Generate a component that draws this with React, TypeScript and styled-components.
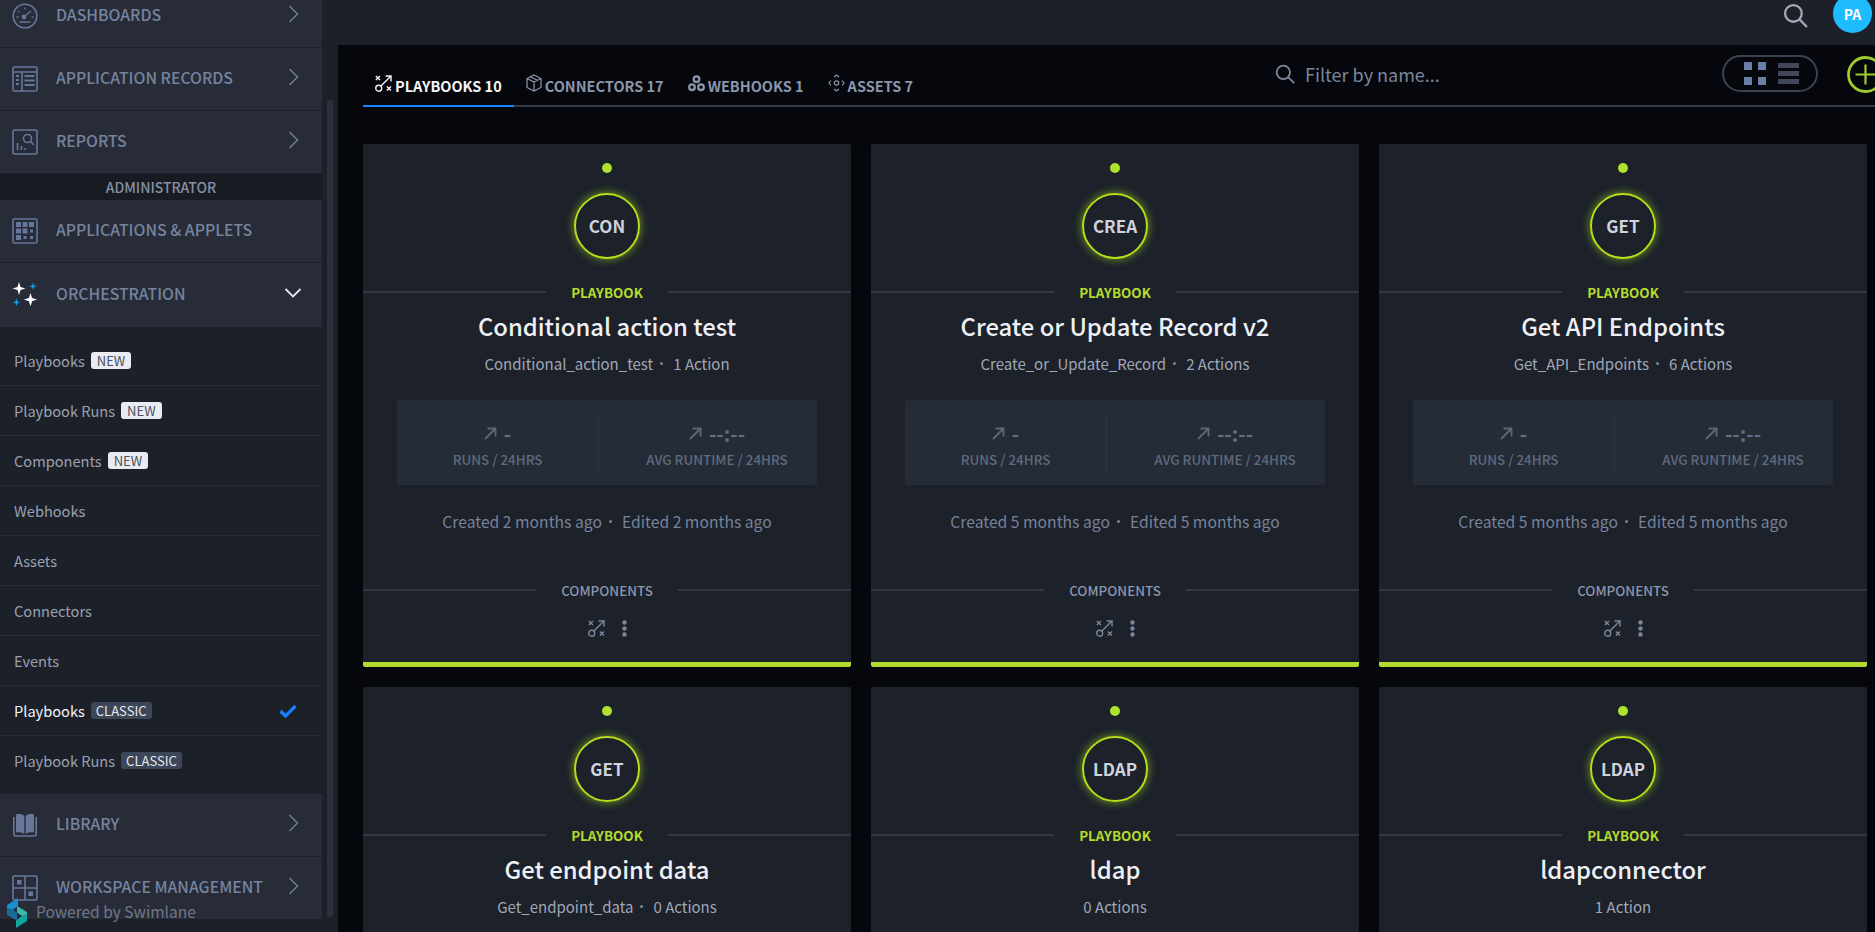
import React from 'react';
import styled, { createGlobalStyle } from 'styled-components';

const FONT = '"Noto Sans CJK JP", "Noto Sans", sans-serif';
const LIME = '#b1dc2e';

const GlobalStyle = createGlobalStyle`
  html, body {
    margin: 0;
    height: 100%;
    overflow: hidden;
    background: #05070c;
    font-family: ${FONT};
  }
  * { box-sizing: border-box; }
`;

const Shell = styled.div`
  position: relative;
  display: flex;
  width: 1875px;
  height: 932px;
  overflow: hidden;
`;

const Sidebar = styled.aside`
  display: flex;
  flex: none;
  width: 338px;
  height: 100%;
  background: #1c2029;
`;

const NavColumn = styled.div`
  width: 322px;
  height: 921px;
  overflow: hidden;
`;

const NavScroll = styled.div`
  margin-top: -15px;
`;

const ScrollTrack = styled.div`
  width: 16px;
  padding: 100px 5px 15px;
  height: 100%;
`;

const ScrollThumb = styled.div`
  width: 6px;
  height: 817px;
  background: #2b303d;
  border-radius: 3px;
`;

const NavItem = styled.div<{ $open?: boolean }>`
  display: flex;
  align-items: center;
  height: ${(p) => (p.$open ? 65 : 63)}px;
  padding: 0 23px 0 12px;
  background: #272c38;
  border-bottom: 1px solid #1c2029;
  color: #76839e;
  font-size: 15.8px;
  font-weight: 500;
`;

const NavIcon = styled.span`
  display: flex;
  flex: none;
  width: 26px;
  height: 26px;
  margin-right: 18px;
  color: #67779a;
`;

const NavLabel = styled.span`
  flex: 1;
  margin-bottom: 4px;
  white-space: nowrap;
`;

const ChevronSlot = styled.span<{ $down?: boolean }>`
  display: flex;
  margin-bottom: 4px;
  margin-right: ${(p) => (p.$down ? -3 : 0)}px;
`;

const Administrator = styled.div`
  height: 26px;
  line-height: 26px;
  background: #181b22;
  color: #8690a4;
  font-size: 14px;
  font-weight: 500;
  text-align: center;
`;

const SubList = styled.div`
  padding: 8px 0;
`;

const SubRow = styled.div<{ $last?: boolean }>`
  display: flex;
  align-items: center;
  height: 50px;
  padding: 0 25px 0 14px;
  border-bottom: 1px solid ${(p) => (p.$last ? 'transparent' : '#272c37')};
`;

const SubLabel = styled.span<{ $active?: boolean }>`
  color: ${(p) => (p.$active ? '#f2f3f6' : '#9aa1b1')};
  font-size: 14.6px;
`;

const Badge = styled.span<{ $classic?: boolean }>`
  margin-left: 6px;
  padding: 0 ${(p) => (p.$classic ? 5 : 6)}px;
  height: 17px;
  line-height: 17px;
  border-radius: 3px;
  font-size: 13px;
  background: ${(p) => (p.$classic ? '#3e4659' : '#e9ebf0')};
  color: ${(p) => (p.$classic ? '#e6e9ef' : '#4a5160')};
`;

const Check = styled.span`
  display: flex;
  margin-left: auto;
  color: #1483ff;
`;

const PoweredBy = styled.div`
  position: absolute;
  left: 7px;
  bottom: 4px;
  display: flex;
  align-items: center;
  gap: 9px;
  color: #6f7888;
  font-size: 15.5px;
`;

const PoweredText = styled.span`
  padding-bottom: 4px;
`;

const Content = styled.div`
  display: flex;
  flex: 1;
  flex-direction: column;
  min-width: 0;
  margin-left: -16px;
`;

const TopBar = styled.header`
  display: flex;
  flex: none;
  align-items: flex-start;
  justify-content: flex-end;
  height: 45px;
  padding: 3px 3px 0 0;
  background: #1c2029;
`;

const TopSearch = styled.span`
  display: flex;
  margin-right: 25px;
  color: #a3a9b8;
`;

const Avatar = styled.div`
  display: flex;
  align-items: center;
  justify-content: center;
  width: 39px;
  height: 39px;
  margin-top: -9px;
  border-radius: 50%;
  background: #1fbbff;
  color: #fff;
  font-size: 14px;
  font-weight: 700;
`;

const Main = styled.main`
  flex: 1;
  margin-left: 16px;
  padding-left: 25px;
  background: #05070c;
`;

const Toolbar = styled.div`
  display: flex;
  align-items: flex-end;
  width: 1512px;
  height: 62px;
  border-bottom: 2px solid #343a48;
`;

const Tabs = styled.div`
  display: flex;
  flex: none;
`;

const Tab = styled.div<{ $active?: boolean }>`
  display: flex;
  align-items: center;
  gap: 3px;
  height: 36px;
  margin-bottom: -2px;
  padding: 0 12px 6px;
  border-bottom: 2px solid ${(p) => (p.$active ? '#1483ff' : 'transparent')};
  color: ${(p) => (p.$active ? '#f4f5f8' : '#8b96ac')};
  font-size: 14.5px;
  font-weight: 700;
  white-space: nowrap;
`;

const TabIcon = styled.span`
  display: flex;
  margin-top: -4px;
`;

const Filter = styled.div`
  display: flex;
  align-items: center;
  align-self: center;
  gap: 10px;
  margin-left: 350px;
  margin-bottom: 3px;
  color: #7b869c;
  font-size: 18px;
`;

const ViewToggle = styled.div`
  display: flex;
  align-items: center;
  align-self: center;
  gap: 12px;
  flex: none;
  width: 96px;
  height: 37px;
  margin-left: auto;
  margin-bottom: 3px;
  padding-left: 20px;
  border: 2px solid #3a4150;
  border-radius: 19px;
`;

const AddButton = styled.div`
  display: flex;
  flex: none;
  align-self: center;
  margin-left: 29px;
  margin-right: -9px;
  margin-bottom: 2px;
  color: #a0cc2c;
`;

const CardGrid = styled.div`
  display: grid;
  grid-template-columns: repeat(3, 488px);
  gap: 20px;
  margin-top: 37px;
`;

const Card = styled.article`
  display: flex;
  flex-direction: column;
  align-items: center;
  height: 523px;
  padding-top: 19px;
  background: #1c212a;
  border-bottom: 5px solid ${LIME};
  border-radius: 2px;
`;

const StatusDot = styled.div`
  width: 10px;
  height: 10px;
  border-radius: 50%;
  background: #aee22f;
`;

const Monogram = styled.div`
  display: flex;
  align-items: center;
  justify-content: center;
  width: 66px;
  height: 66px;
  margin-top: 20px;
  padding-bottom: 2px;
  border: 2px solid #b6de1a;
  border-radius: 50%;
  color: #cfd3dd;
  font-size: 17px;
  font-weight: 700;
  box-shadow: 0 0 10px rgba(176, 222, 30, 0.65);
`;

const Divider = styled.div<{ $muted?: boolean; $top: number }>`
  display: flex;
  align-items: center;
  align-self: stretch;
  gap: 25px;
  margin-top: ${(p) => p.$top}px;
  height: 16px;
  color: ${(p) => (p.$muted ? '#8b96ac' : '#b4dc2a')};
  font-size: 13.4px;
  font-weight: ${(p) => (p.$muted ? 500 : 700)};
  white-space: nowrap;

  &::before,
  &::after {
    content: '';
    flex: 1;
    height: 2px;
    background: #323846;
  }
`;

const Title = styled.h2`
  margin: 11px 0 0;
  height: 30px;
  line-height: 30px;
  color: #eef0f5;
  font-size: 23.8px;
  font-weight: 500;
`;

const Subtitle = styled.div`
  display: flex;
  align-items: center;
  gap: 7px;
  height: 20px;
  margin-top: 12px;
  color: #a0a7b7;
  font-size: 15px;
  font-weight: 400;
`;

const Dot = styled.span`
  width: 3px;
  height: 3px;
  margin-right: 3px;
  border-radius: 50%;
  background: #7e8798;
`;

const Stats = styled.div`
  display: grid;
  grid-template-columns: 201px 1fr;
  flex: none;
  width: 420px;
  height: 85px;
  margin-top: 27px;
  padding: 13px 0;
  background: #252b37;
  border-radius: 2px;
`;

const Stat = styled.div<{ $divided?: boolean }>`
  display: flex;
  flex-direction: column;
  align-items: center;
  padding-top: 6px;
  padding-left: ${(p) => (p.$divided ? 18 : 0)}px;
  border-left: ${(p) => (p.$divided ? '1px solid #2e3542' : 'none')};
`;

const StatValue = styled.div`
  display: flex;
  align-items: center;
  gap: 7px;
  height: 26px;
  margin-top: 1px;
  color: #646e80;
  font-size: 20px;
  font-weight: 700;
`;

const StatLabel = styled.div`
  margin-top: 3px;
  color: #5f6a7d;
  font-size: 13.4px;
  font-weight: 500;
  white-space: nowrap;
`;

const Dates = styled.div`
  display: flex;
  align-items: center;
  gap: 7px;
  height: 20px;
  margin-top: 26px;
  color: #78839a;
  font-size: 15.7px;
`;

const CardActions = styled.div`
  display: flex;
  align-items: center;
  gap: 17px;
  height: 20px;
  margin-top: 20px;
  color: #7a869c;
`;

const Swatch = styled.span<{ $bright?: boolean; $w: number; $h: number }>`
  display: block;
  width: ${(p) => p.$w}px;
  height: ${(p) => p.$h}px;
  background: ${(p) => (p.$bright ? '#6a7fa6' : '#3f4759')};
`;

const GridIcon = styled.div`
  display: grid;
  grid-template-columns: 8px 8px;
  gap: 7px 6px;
`;

const ListIcon = styled.div`
  display: grid;
  gap: 3px;
`;

type IconProps = { size?: number };

const Playbook = ({ size = 17 }: IconProps) => (
  <svg width={size} height={size} viewBox="0 0 16 16" fill="none" stroke="currentColor" strokeWidth="1.3">
    <circle cx="3.5" cy="12.5" r="2.8" />
    <path d="M.8 1l3.800 3.800M4.600 1L.8 4.800M11.200 10.800l3.800 3.800M15 10.800l-3.800 3.800M5.600 10.400L15 1M10 .9h5.100V6" />
  </svg>
);

const Cube = () => (
  <svg width="16" height="18" viewBox="0 0 16 18" fill="none" stroke="currentColor" strokeWidth="1.2">
    <path d="M8 1l7 3.500v9L8 17l-7-3.500v-9zM1 4.500L8 8l7-3.500M8 8v9M4.500 2.800l7 3.500" />
  </svg>
);

const Webhook = () => (
  <svg width="17" height="17" viewBox="0 0 17 17" fill="none" stroke="currentColor" strokeWidth="2.300">
    <circle cx="8.500" cy="4.200" r="2.800" />
    <circle cx="4" cy="12.200" r="2.800" />
    <circle cx="13" cy="12.200" r="2.800" />
  </svg>
);

const Asset = () => (
  <svg width="17" height="18" viewBox="0 0 17 18" fill="none" stroke="currentColor" strokeWidth="1.200">
    <circle cx="8.500" cy="9" r="2.200" />
    <path d="M6 3l2.500-2L11 3M6 15l2.500 2L11 15M3 6.500L1 9l2 2.500M14 6.500L16 9l-2 2.500" />
  </svg>
);

const Gauge = () => (
  <svg viewBox="0 0 26 26" fill="none" stroke="currentColor" strokeWidth="1.600">
    <circle cx="13" cy="13" r="11.800" />
    <circle cx="12" cy="14" r="1.600" fill="currentColor" />
    <path d="M13 13l6-5M13 4.500v2M6 8l1.500 1.200M4.500 14h2M21.500 14h-2M7.500 19h11" strokeWidth="1.300" />
  </svg>
);

const Records = () => (
  <svg viewBox="0 0 26 26" fill="none" stroke="currentColor" strokeWidth="1.600">
    <rect x="1" y="1" width="24" height="24" rx="1.500" />
    <path d="M1 6h24M10 6v19" />
    <path d="M4 10h3M4 14h3M4 18h3M12.500 10h10M12.500 14.500h10M12.500 19h10" strokeWidth="2" />
  </svg>
);

const Report = () => (
  <svg viewBox="0 0 26 26" fill="none" stroke="currentColor" strokeWidth="1.600">
    <rect x="1" y="1" width="24" height="24" rx="1.500" />
    <circle cx="15.500" cy="9.500" r="4" />
    <path d="M18.500 12.500l3.500 3.500M5.500 21v-7M9.500 21v-4M13 21v-2" />
  </svg>
);

const AppsIcon = () => (
  <svg viewBox="0 0 26 26" fill="none" stroke="currentColor" strokeWidth="1.600">
    <rect x="1" y="1" width="24" height="24" rx="1.500" />
    <g fill="currentColor" stroke="none">
      <rect x="4" y="4" width="5" height="5" />
      <rect x="10.500" y="4" width="5" height="5" />
      <rect x="17" y="4" width="5" height="5" />
      <rect x="4" y="10.500" width="5" height="5" />
      <rect x="10.500" y="10.500" width="5" height="5" />
      <rect x="18" y="11.500" width="3" height="3" />
      <rect x="4" y="17" width="5" height="5" />
      <rect x="11.500" y="18" width="3" height="3" />
      <rect x="18" y="18" width="3" height="3" />
    </g>
  </svg>
);

const Sparkles = () => (
  <svg viewBox="0 0 26 26">
    <path fill="#fff" d="M7 0l1.500 5L13.500 6.500 8.500 8 7 13 5.500 8 .5 6.500 5.500 5zM18.500 11l1.600 5 5 1.600-5 1.600-1.600 5-1.600-5-5-1.600 5-1.600z" />
    <path fill="#12a0f0" d="M21 .5l.9 2.900 2.900.9-2.900.9-.9 2.900-.9-2.900-2.900-.9 2.900-.9zM4.500 16.500l.9 2.900 2.900.9-2.900.9-.9 2.900-.9-2.900-2.900-.9 2.900-.9z" />
  </svg>
);

const Book = () => (
  <svg viewBox="0 0 26 26">
    <path fill="currentColor" d="M4 2.500c3-1 6.500-.5 8.300 1.500V22c-2-1.500-5-2-8.300-1.500zM22 2.500c-3-1-6.500-.5-8.300 1.500V22c2-1.500 5-2 8.300-1.500z" />
    <path fill="none" stroke="currentColor" strokeWidth="1.600" d="M1.800 5v17c0 1.200.8 2 2 2h18.400c1.200 0 2-.8 2-2V5" />
  </svg>
);

const Workspace = () => (
  <svg viewBox="0 0 26 26" fill="none" stroke="currentColor" strokeWidth="1.600">
    <rect x="1" y="1" width="24" height="24" rx="1.500" />
    <path d="M13 1v24M1 13h24" />
    <rect x="5" y="5" width="4.500" height="4.500" fill="currentColor" stroke="none" />
    <rect x="16.500" y="16.500" width="4.500" height="4.500" fill="currentColor" stroke="none" />
  </svg>
);

const ChevronRight = () => (
  <svg width="12" height="18" viewBox="0 0 12 18" fill="none" stroke="#6d7a94" strokeWidth="1.600">
    <path d="M2.500 1l8 8-8 8" />
  </svg>
);

const ChevronDown = () => (
  <svg width="18" height="12" viewBox="0 0 18 12" fill="none" stroke="#e6e9ef" strokeWidth="1.800">
    <path d="M1.500 2L9 9.500 16.500 2" />
  </svg>
);

const Search = ({ size }: { size: number }) => (
  <svg width={size} height={size} viewBox="0 0 24 24" fill="none" stroke="currentColor" strokeWidth="2.200">
    <circle cx="10" cy="10" r="8" />
    <path d="M16 16l7 7" />
  </svg>
);

const ArrowUpRight = () => (
  <svg width="13" height="13" viewBox="0 0 13 13" fill="none" stroke="#5d6779" strokeWidth="1.800">
    <path d="M1 12L11 2M3.500 1.500h8v8" />
  </svg>
);

const Kebab = () => (
  <svg width="5" height="17" viewBox="0 0 5 17" fill="currentColor">
    <circle cx="2.500" cy="2.500" r="2.200" />
    <circle cx="2.500" cy="8.500" r="2.200" />
    <circle cx="2.500" cy="14.500" r="2.200" />
  </svg>
);

const Plus = () => (
  <svg width="37" height="37" viewBox="0 0 37 37" fill="none" stroke="currentColor">
    <circle cx="18.500" cy="18.500" r="17" strokeWidth="2.800" />
    <path d="M18.500 8.500v20M8.500 18.500h20" strokeWidth="2.200" />
  </svg>
);

const Logo = () => (
  <svg width="20" height="30" viewBox="0 0 20 30">
    <path fill="#1c8fd0" d="M11 0v8l-5 3.500-6-1V7z" />
    <path fill="#1a6a9e" d="M0 10.500l6 1 4 3.500v7.500L0 17z" />
    <path fill="#3bb8a8" d="M10 8l10 6v3l-5 1-5-3.500z" />
    <path fill="#13a89e" d="M20 17v6l-11 7v-7.500l6-4.500z" />
  </svg>
);

const navTop = [
  { label: 'DASHBOARDS', icon: <Gauge /> },
  { label: 'APPLICATION RECORDS', icon: <Records /> },
  { label: 'REPORTS', icon: <Report /> },
];

const subItems = [
  { label: 'Playbooks', badge: 'NEW' },
  { label: 'Playbook Runs', badge: 'NEW' },
  { label: 'Components', badge: 'NEW' },
  { label: 'Webhooks' },
  { label: 'Assets' },
  { label: 'Connectors' },
  { label: 'Events' },
  { label: 'Playbooks', badge: 'CLASSIC', active: true },
  { label: 'Playbook Runs', badge: 'CLASSIC' },
];

const cards = [
  { mono: 'CON', title: 'Conditional action test', key: 'Conditional_action_test', actions: '1 Action', age: '2 months' },
  { mono: 'CREA', title: 'Create or Update Record v2', key: 'Create_or_Update_Record', actions: '2 Actions', age: '5 months' },
  { mono: 'GET', title: 'Get API Endpoints', key: 'Get_API_Endpoints', actions: '6 Actions', age: '5 months' },
  { mono: 'GET', title: 'Get endpoint data', key: 'Get_endpoint_data', actions: '0 Actions', age: '5 months' },
  { mono: 'LDAP', title: 'ldap', key: '', actions: '0 Actions', age: '5 months' },
  { mono: 'LDAP', title: 'ldapconnector', key: '', actions: '1 Action', age: '5 months' },
];

const App: React.FC = () => {
  return (
    <Shell>
      <GlobalStyle />
      <Sidebar>
        <NavColumn>
          <NavScroll>
            {navTop.map((item) => (
              <NavItem key={item.label}>
                <NavIcon>{item.icon}</NavIcon>
                <NavLabel>{item.label}</NavLabel>
                <ChevronSlot><ChevronRight /></ChevronSlot>
              </NavItem>
            ))}
            <Administrator>ADMINISTRATOR</Administrator>
            <NavItem>
              <NavIcon><AppsIcon /></NavIcon>
              <NavLabel>APPLICATIONS &amp; APPLETS</NavLabel>
            </NavItem>
            <NavItem $open>
              <NavIcon><Sparkles /></NavIcon>
              <NavLabel>ORCHESTRATION</NavLabel>
              <ChevronSlot $down><ChevronDown /></ChevronSlot>
            </NavItem>
            <SubList>
              {subItems.map((item, i) => (
                <SubRow key={i} $last={i === subItems.length - 1}>
                  <SubLabel $active={item.active}>{item.label}</SubLabel>
                  {item.badge && <Badge $classic={item.badge === 'CLASSIC'}>{item.badge}</Badge>}
                  {item.active && (
                    <Check>
                      <svg width="18" height="14" viewBox="0 0 18 14" fill="none" stroke="currentColor" strokeWidth="3.200">
                        <path d="M1.500 7l5 5L16.500 2" />
                      </svg>
                    </Check>
                  )}
                </SubRow>
              ))}
            </SubList>
            <NavItem>
              <NavIcon><Book /></NavIcon>
              <NavLabel>LIBRARY</NavLabel>
              <ChevronSlot><ChevronRight /></ChevronSlot>
            </NavItem>
            <NavItem>
              <NavIcon><Workspace /></NavIcon>
              <NavLabel>WORKSPACE MANAGEMENT</NavLabel>
              <ChevronSlot><ChevronRight /></ChevronSlot>
            </NavItem>
          </NavScroll>
        </NavColumn>
        <ScrollTrack>
          <ScrollThumb />
        </ScrollTrack>
      </Sidebar>
      <PoweredBy>
        <Logo />
        <PoweredText>Powered by Swimlane</PoweredText>
      </PoweredBy>
      <Content>
        <TopBar>
          <TopSearch><Search size={25} /></TopSearch>
          <Avatar>PA</Avatar>
        </TopBar>
        <Main>
          <Toolbar>
            <Tabs>
              <Tab $active><TabIcon><Playbook /></TabIcon>PLAYBOOKS 10</Tab>
              <Tab><TabIcon><Cube /></TabIcon>CONNECTORS 17</Tab>
              <Tab><TabIcon><Webhook /></TabIcon>WEBHOOKS 1</Tab>
              <Tab><TabIcon><Asset /></TabIcon>ASSETS 7</Tab>
            </Tabs>
            <Filter>
              <Search size={20} />
              Filter by name...
            </Filter>
            <ViewToggle>
              <GridIcon>
                <Swatch $bright $w={8} $h={8} />
                <Swatch $bright $w={8} $h={8} />
                <Swatch $bright $w={8} $h={8} />
                <Swatch $bright $w={8} $h={8} />
              </GridIcon>
              <ListIcon>
                <Swatch $w={21} $h={5} />
                <Swatch $w={21} $h={5} />
                <Swatch $w={21} $h={5} />
              </ListIcon>
            </ViewToggle>
            <AddButton><Plus /></AddButton>
          </Toolbar>
          <CardGrid>
            {cards.map((card) => (
              <Card key={card.title}>
                <StatusDot />
                <Monogram>{card.mono}</Monogram>
                <Divider $top={25}>PLAYBOOK</Divider>
                <Title>{card.title}</Title>
                <Subtitle>
                  {card.key && <span>{card.key}</span>}
                  {card.key && <Dot />}
                  <span>{card.actions}</span>
                </Subtitle>
                <Stats>
                  <Stat>
                    <StatValue><ArrowUpRight />-</StatValue>
                    <StatLabel>RUNS / 24HRS</StatLabel>
                  </Stat>
                  <Stat $divided>
                    <StatValue><ArrowUpRight />--:--</StatValue>
                    <StatLabel>AVG RUNTIME / 24HRS</StatLabel>
                  </Stat>
                </Stats>
                <Dates>
                  <span>Created {card.age} ago</span>
                  <Dot />
                  <span>Edited {card.age} ago</span>
                </Dates>
                <Divider $muted $top={51}>COMPONENTS</Divider>
                <CardActions>
                  <Playbook size={17} />
                  <Kebab />
                </CardActions>
              </Card>
            ))}
          </CardGrid>
        </Main>
      </Content>
    </Shell>
  );
};

export default App;
